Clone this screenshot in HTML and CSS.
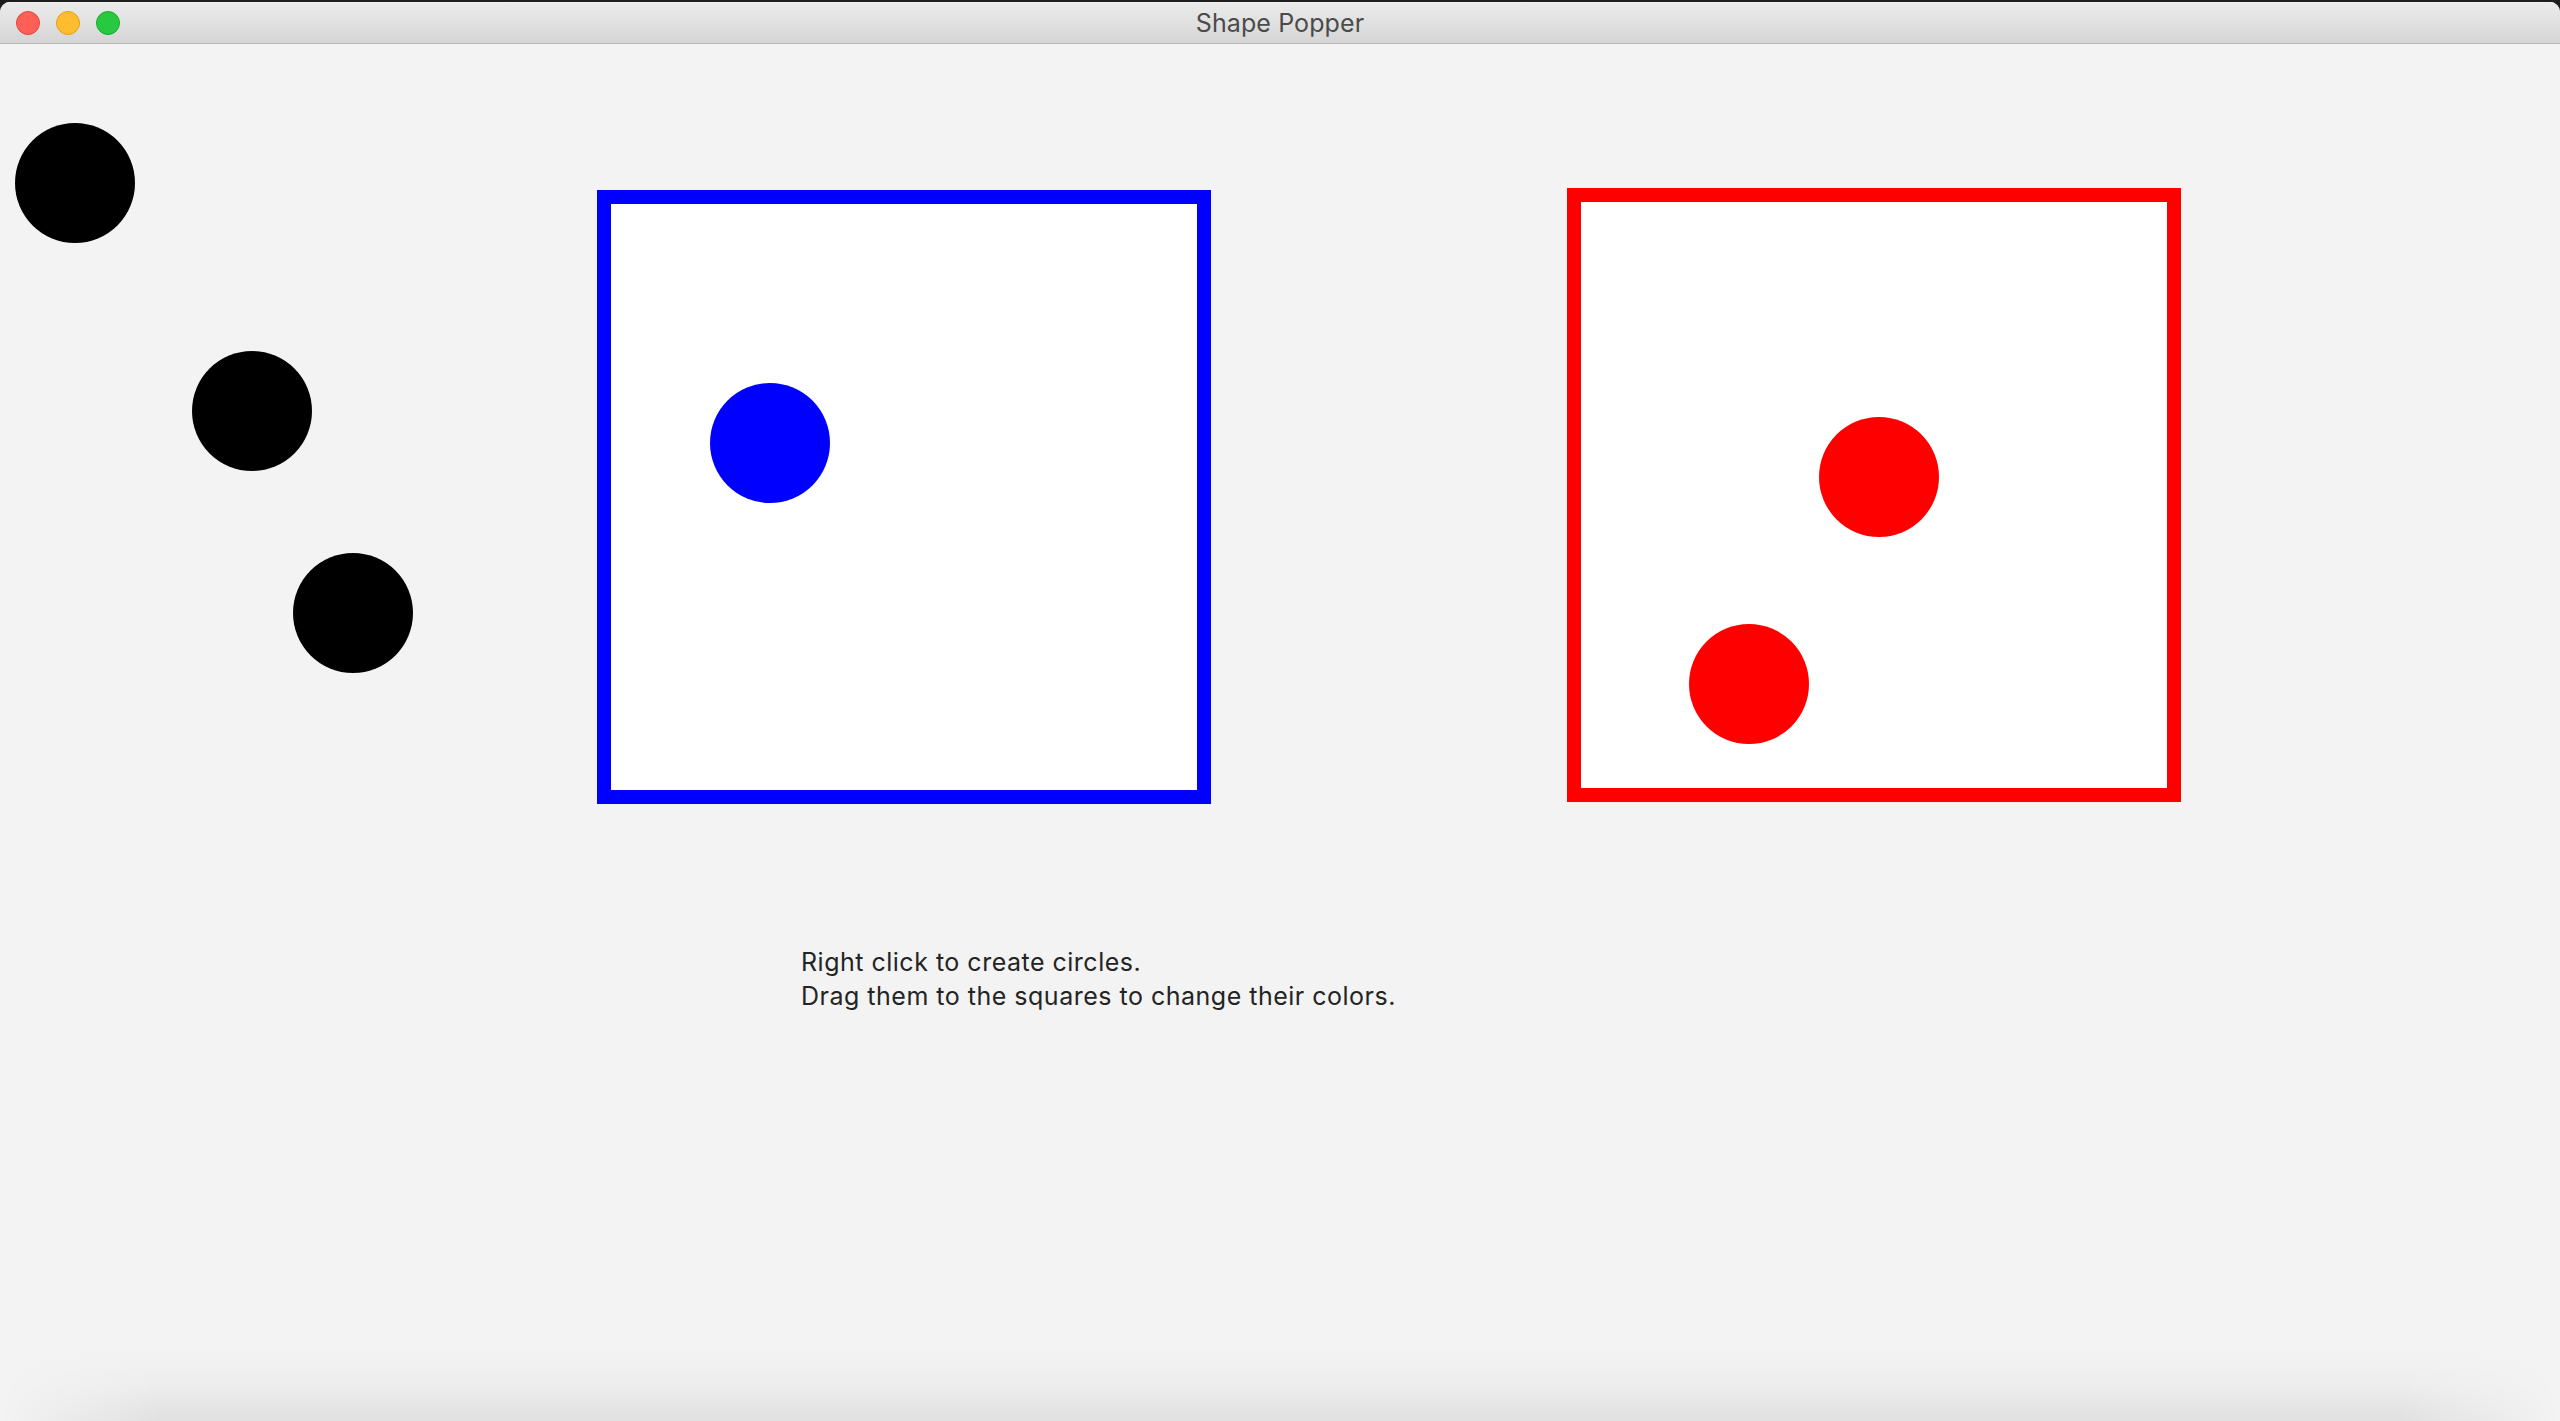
FILE: index.html
```html
<!DOCTYPE html>
<html>
<head>
<meta charset="utf-8">
<title>Shape Popper</title>
<link rel="stylesheet" href="styles.css">
</head>
<body>
<div class="window">
  <header class="titlebar">
    <div class="lights">
      <span class="light close"></span>
      <span class="light minimize"></span>
      <span class="light zoom"></span>
    </div>
    <div class="title">Shape Popper</div>
  </header>
  <main class="canvas">
    <div class="square square-blue"></div>
    <div class="square square-red"></div>
    <div class="circle black c1"></div>
    <div class="circle black c2"></div>
    <div class="circle black c3"></div>
    <div class="circle blue c4"></div>
    <div class="circle red c5"></div>
    <div class="circle red c6"></div>
    <p class="instructions">Right click to create circles.<br>Drag them to the squares to change their colors.</p>
    <div class="bottom-shadow"></div>
  </main>
</div>
</body>
</html>
```

FILE: styles.css
```css
html, body {
  margin: 0;
  padding: 0;
  background: #1d1d1d;
  width: 2560px;
  height: 1421px;
  overflow: hidden;
}

.window {
  margin-top: 2px;
  height: 1419px;
  display: flex;
  flex-direction: column;
  border-radius: 10px 10px 0 0;
  overflow: hidden;
  background: #f3f3f3;
}

.titlebar {
  position: relative;
  height: 41px;
  flex: none;
  background: linear-gradient(to bottom, #ebebeb 0%, #e3e3e3 40%, #d5d5d5 100%);
  border-bottom: 1px solid #b6b6b6;
  box-shadow: inset 0 1px 0 #f4f4f4;
  display: flex;
  align-items: center;
  justify-content: center;
}

.lights {
  position: absolute;
  left: 16px;
  top: 9px;
  display: flex;
  gap: 16px;
}

.light {
  width: 24px;
  height: 24px;
  border-radius: 50%;
  box-sizing: border-box;
}

.close { background: #fe5f57; border: 1px solid #e2463f; }
.minimize { background: #febc2e; border: 1px solid #e1a116; }
.zoom { background: #28c840; border: 1px solid #14ae2a; }

.title {
  font-family: "Inter", "Liberation Sans", sans-serif;
  font-size: 25px;
  color: #4b4b4b;
  letter-spacing: 0.1px;
  margin-top: 1px;
}

.canvas {
  position: relative;
  flex: 1;
  background: #f3f3f3;
}

.square {
  position: absolute;
  width: 614px;
  height: 614px;
  box-sizing: border-box;
  border: 14px solid;
  background: #ffffff;
}

.square-blue { left: 597px; top: 146px; border-color: #0000ff; }
.square-red { left: 1567px; top: 144px; border-color: #ff0000; }

.circle {
  position: absolute;
  width: 120px;
  height: 120px;
  border-radius: 50%;
}

.black { background: #000000; }
.blue { background: #0000ff; }
.red { background: #ff0000; }

.c1 { left: 15px; top: 79px; }
.c2 { left: 192px; top: 307px; }
.c3 { left: 293px; top: 509px; }
.c4 { left: 710px; top: 339px; }
.c5 { left: 1819px; top: 373px; }
.c6 { left: 1689px; top: 580px; }

.instructions {
  position: absolute;
  left: 801px;
  top: 901px;
  margin: 0;
  font-family: "Inter", "Liberation Sans", sans-serif;
  font-size: 25px;
  letter-spacing: 0.5px;
  line-height: 34px;
  color: #242424;
}

.bottom-shadow {
  position: absolute;
  left: 0;
  right: 0;
  bottom: 0;
  height: 70px;
  background: linear-gradient(to bottom, rgba(0,0,0,0) 0%, rgba(0,0,0,0.025) 50%, rgba(0,0,0,0.075) 100%);
  -webkit-mask-image: linear-gradient(to right, transparent 0px, #000 160px, #000 calc(100% - 160px), transparent 100%);
  mask-image: linear-gradient(to right, transparent 0px, #000 160px, #000 calc(100% - 160px), transparent 100%);
}
```
